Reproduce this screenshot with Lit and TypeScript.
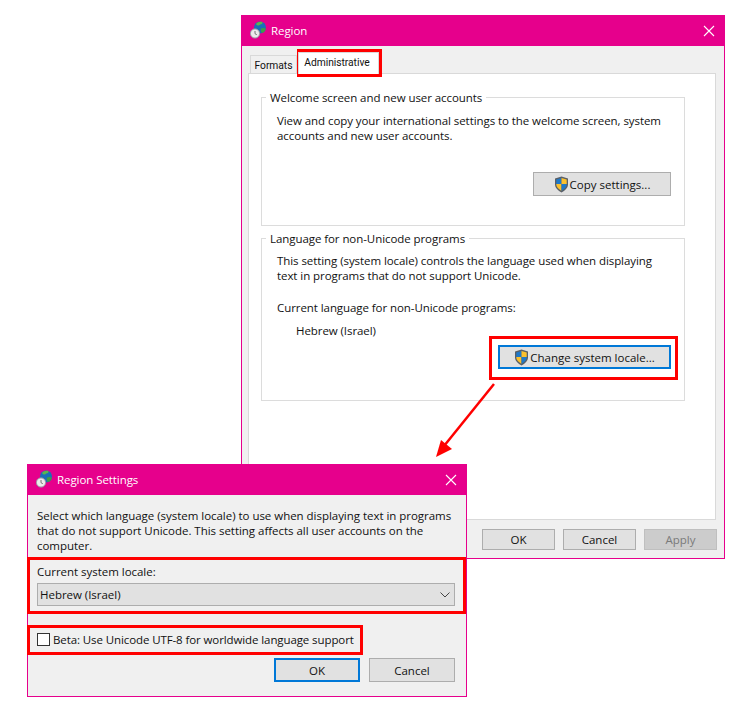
import { LitElement, html, css } from "lit";
import { customElement } from "lit/decorators.js";

const globe = html`<svg class="globe" width="16" height="18" viewBox="0 0 16 18">
  <circle cx="10" cy="6.500" r="6" fill="#1a6fb8"/>
  <path d="M6 3c1.500-2 4.500-2.800 6.500-1.800.4 1.300-.8 1.800-2.300 2.300C9.300 5 7.400 5 6 3z" fill="#5db54c"/>
  <path d="M11 7.500c1.800-.8 3.600-.7 4.800.2-.4 2.200-1.800 3.800-3.600 4.400-1.400-1-1.700-3-1.200-4.600z" fill="#3f9e46"/>
  <circle cx="5" cy="12.500" r="4.600" fill="#ececec" stroke="#9a9aa2" stroke-width="1"/>
  <path d="M5 10v2.700l1.800 1" fill="none" stroke="#6a6a6a" stroke-width=".9"/>
</svg>`;

const shield = html`<svg class="shield" width="15" height="17" viewBox="0 0 15 17">
  <path d="M7.500.6 14 2.600v5.600c0 3.800-3.100 6.400-6.500 8.200C4.100 14.600 1 12 1 8.200V2.600z" fill="#5a5f66"/>
  <path d="M7.500 2 7.500 8 2.300 8V3.600z" fill="#1f78c8"/>
  <path d="M7.500 2 12.700 3.600V8H7.500z" fill="#fbc02d"/>
  <path d="M2.300 8h5.200v6.800C4.800 13.300 2.300 11.300 2.300 8z" fill="#fbc02d"/>
  <path d="M7.500 8h5.200c0 3.300-2.500 5.300-5.200 6.800z" fill="#1f78c8"/>
</svg>`;

const closeX = html`<svg class="close" width="12" height="12" viewBox="0 0 12 12">
  <path d="M1 1 11 11M11 1 1 11" stroke="#fff" stroke-width="1.100" fill="none"/>
</svg>`;

@customElement("app-root")
export class AppRoot extends LitElement {
  static styles = css`
    :host {
      display: block;
      position: relative;
      width: 755px;
      height: 723px;
      background: #fff;
      overflow: hidden;
      font-family: "Open Sans", "Noto Sans", sans-serif;
      font-size: 11.5px;
      color: #111;
      letter-spacing: -0.07px;
    }
    .window {
      position: absolute;
      box-sizing: border-box;
      display: flex;
      flex-direction: column;
      background: #f0f0f0;
      border: 1px solid #e6008c;
    }
    .main { left: 241px; top: 15px; width: 484px; height: 544px; }
    .dialog { left: 27px; top: 464px; width: 440px; height: 233px; }
    .title {
      flex: none;
      height: 30px;
      box-sizing: border-box;
      padding: 0 9px 2px 8px;
      background: #e6008c;
      color: #fff;
      display: flex;
      align-items: center;
      font-size: 11.5px;
    }
    .globe { flex: none; margin-right: 5px; }
    .title .label { flex: 1; }
    .close { flex: none; margin-top: 2px; }
    .tabs {
      flex: none;
      height: 27px;
      margin: 0 8px 0 6px;
      display: flex;
      align-items: flex-end;
      padding-left: 2px;
      font-family: "Roboto", sans-serif;
      font-size: 10.300px;
      letter-spacing: -0.05px;
    }
    .tab {
      box-sizing: border-box;
      height: 19px;
      margin-bottom: -1px;
      border: 1px solid #d9d9d9;
      border-bottom: none;
      background: #f0f0f0;
      display: flex;
      align-items: center;
      justify-content: center;
      width: 47px;
      padding-top: 1px;
    }
    .tab.active {
      height: 22px;
      width: 81px;
      margin-left: 1px;
      background: #fff;
      position: relative;
      z-index: 1;
      padding: 0 3px 3px 0;
    }
    .panel {
      box-sizing: border-box;
      height: 447px;
      margin: 0 8px 0 6px;
      background: #fff;
      border: 1px solid #d9d9d9;
      padding: 23px 30px 0 12px;
      display: flex;
      flex-direction: column;
      gap: 12px;
    }
    fieldset {
      margin: 0;
      box-sizing: border-box;
      border: 1px solid #dcdcdc;
      min-width: 0;
      position: relative;
      padding: 0;
    }
    .g1 { height: 129px; }
    .g2 { height: 163px; }
    legend {
      margin-left: 4px;
      padding: 0 4px;
      font-size: 11.500px;
      line-height: 16px;
      height: 0;
      transform: translateY(-8px);
    }
    .ginner {
      box-sizing: border-box;
      height: 100%;
      display: flex;
      flex-direction: column;
      padding-left: 15px;
      padding-right: 12px;
      padding-top: 14px;
    }
    .g1 .ginner { padding-top: 15px; }
    p { margin: 0; line-height: 15px; }
    .lead { margin-top: 17px; }
    .value { margin-top: 8px; padding-left: 19px; line-height: 16px; }
    .btn {
      box-sizing: border-box;
      height: 24px;
      background: #e1e1e1;
      border: 1px solid #adadad;
      display: flex;
      align-items: center;
      justify-content: center;
      gap: 1px;
      font-size: 11.500px;
      letter-spacing: 0;
    }
    .btn.focus { border: 2px solid #0078d7; }
    .btn.copy { width: 138px; align-self: flex-end; margin-right: 1px; margin-top: 29px; }
    .btn.change { width: 173px; align-self: flex-end; margin-right: 1px; margin-top: 6px; }
    .foot {
      flex: 1;
      display: flex;
      justify-content: flex-end;
      gap: 8px;
      padding: 9px 7px 0 0;
    }
    .foot .btn { width: 73px; height: 21px; }
    .btn.disabled { background: #cccccc; border-color: #bfbfbf; color: #7a7a7a; }
    .dbody {
      flex: 1;
      display: flex;
      flex-direction: column;
      padding: 13px 11px 0 9px;
      letter-spacing: -0.03px;
    }
    .dbody p { line-height: 15px; }
    .dlabel { margin-top: 11px; line-height: 16px; }
    .combo {
      box-sizing: border-box;
      height: 23px;
      margin-top: 3px;
      background: #e1e1e1;
      border: 1px solid #adadad;
      display: flex;
      align-items: center;
      justify-content: space-between;
      padding: 0 3px 0 2px;
    }
    .check {
      margin-top: 26px;
      display: flex;
      align-items: center;
      gap: 3px;
      letter-spacing: -0.1px;
    }
    .box {
      box-sizing: border-box;
      width: 13px;
      height: 13px;
      background: #fff;
      border: 1px solid #333;
      flex: none;
    }
    .dactions {
      display: flex;
      justify-content: flex-end;
      gap: 9px;
      margin-top: 11px;
    }
    .dactions .btn { width: 86px; }
    .mark {
      position: absolute;
      box-sizing: border-box;
      border: 3px solid #f00;
      pointer-events: none;
    }
    .m1 { left: 297px; top: 49px; width: 85px; height: 28px; }
    .m2 { left: 489px; top: 336px; width: 189px; height: 44px; }
    .m3 { left: 27px; top: 557px; width: 439px; height: 57px; }
    .m4 { left: 27px; top: 625px; width: 336px; height: 30px; }
    .arrow { position: absolute; left: 430px; top: 380px; pointer-events: none; }
  `;

  render() {
    return html`
      <section class="window main">
        <header class="title">${globe}<span class="label">Region</span>${closeX}</header>
        <nav class="tabs">
          <div class="tab">Formats</div>
          <div class="tab active">Administrative</div>
        </nav>
        <div class="panel">
          <fieldset class="g1">
            <legend>Welcome screen and new user accounts</legend>
            <div class="ginner">
              <p>View and copy your international settings to the welcome screen, system<br />accounts and new user accounts.</p>
              <div class="btn copy">${shield}<span>Copy settings...</span></div>
            </div>
          </fieldset>
          <fieldset class="g2">
            <legend>Language for non-Unicode programs</legend>
            <div class="ginner">
              <p>This setting (system locale) controls the language used when displaying<br />text in programs that do not support Unicode.</p>
              <p class="lead">Current language for non-Unicode programs:</p>
              <p class="value">Hebrew (Israel)</p>
              <div class="btn focus change">${shield}<span>Change system locale...</span></div>
            </div>
          </fieldset>
        </div>
        <div class="foot">
          <div class="btn">OK</div>
          <div class="btn">Cancel</div>
          <div class="btn disabled">Apply</div>
        </div>
      </section>

      <section class="window dialog">
        <header class="title">${globe}<span class="label">Region Settings</span>${closeX}</header>
        <div class="dbody">
          <p>Select which language (system locale) to use when displaying text in programs<br />that do not support Unicode. This setting affects all user accounts on the<br />computer.</p>
          <div class="dlabel">Current system locale:</div>
          <div class="combo">
            <span>Hebrew (Israel)</span>
            <svg width="12" height="8" viewBox="0 0 12 8"><path d="M1.500 1.500 6 6l4.500-4.500" fill="none" stroke="#444" stroke-width="1"/></svg>
          </div>
          <label class="check"><span class="box"></span><span>Beta: Use Unicode UTF-8 for worldwide language support</span></label>
          <div class="dactions">
            <div class="btn focus">OK</div>
            <div class="btn">Cancel</div>
          </div>
        </div>
      </section>

      <div class="mark m1"></div>
      <div class="mark m2"></div>
      <div class="mark m3"></div>
      <div class="mark m4"></div>
      <svg class="arrow" width="70" height="82" viewBox="0 0 70 82">
        <path d="M64 4 14 66" stroke="#f00" stroke-width="2.500" fill="none"/>
        <path d="M6 77 11 60 22 69z" fill="#f00"/>
      </svg>
    `;
  }
}
